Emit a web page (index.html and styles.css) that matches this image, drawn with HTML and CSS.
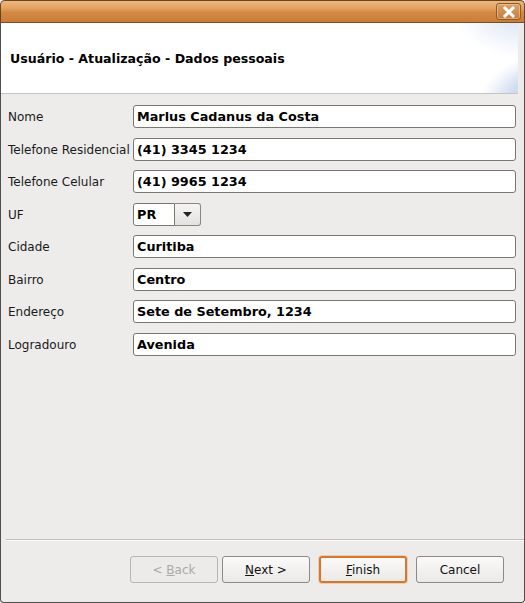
FILE: index.html
```html
<!DOCTYPE html>
<html lang="pt">
<head>
<meta charset="utf-8">
<link rel="stylesheet" href="styles.css">
</head>
<body>
<div class="window">
  <div class="titlebar">
    <div class="close-btn">
      <svg width="14" height="12" viewBox="0 0 14 12"><path d="M3 2 L11 10 M11 2 L3 10" stroke="#fff" stroke-width="3" stroke-linecap="square"/><path d="M3 2 L11 10 M11 2 L3 10" stroke="#fff" stroke-width="2.2"/></svg>
    </div>
  </div>
  <div class="frame">
    <div class="header">
      <div class="header-title">Usuário - Atualização - Dados pessoais</div>
      <div class="header-deco"></div>
    </div>
    <div class="form">
      <div class="row"><label class="lbl">Nome</label><div class="field">Marlus Cadanus da Costa</div></div>
      <div class="row"><label class="lbl">Telefone Residencial</label><div class="field">(41) 3345 1234</div></div>
      <div class="row"><label class="lbl">Telefone Celular</label><div class="field">(41) 9965 1234</div></div>
      <div class="row"><label class="lbl">UF</label>
        <div class="combo"><div class="combo-text">PR</div><div class="combo-btn"><svg width="9" height="5" viewBox="0 0 9 5"><path d="M0 0 H9 L4.5 5 Z" fill="#222"/></svg></div></div>
      </div>
      <div class="row"><label class="lbl">Cidade</label><div class="field">Curitiba</div></div>
      <div class="row"><label class="lbl">Bairro</label><div class="field">Centro</div></div>
      <div class="row"><label class="lbl">Endereço</label><div class="field">Sete de Setembro, 1234</div></div>
      <div class="row"><label class="lbl">Logradouro</label><div class="field">Avenida</div></div>
    </div>
    <div class="footer">
      <div class="sep"></div>
      <div class="buttons">
        <div class="btn disabled"><span>&lt; <u>B</u>ack</span></div>
        <div class="btn"><span><u>N</u>ext &gt;</span></div>
        <div class="btn default"><span><u>F</u>inish</span></div>
        <div class="btn"><span>Cancel</span></div>
      </div>
    </div>
  </div>
</div>
</body>
</html>
```

FILE: styles.css
```css
html, body {
  margin: 0;
  padding: 0;
  background: #edeceb;
}
body {
  width: 525px;
  height: 603px;
  overflow: hidden;
  font-family: "DejaVu Sans", sans-serif;
}
.window {
  width: 525px;
  height: 603px;
  display: flex;
  flex-direction: column;
  box-sizing: border-box;
}
.titlebar {
  height: 23px;
  flex: none;
  box-sizing: border-box;
  border: 1px solid #6b4520;
  border-bottom: 1px solid #7a4d22;
  border-radius: 5px 5px 0 0;
  background: linear-gradient(to bottom, #edb980 0%, #e2a260 35%, #d38943 55%, #c97d3a 100%);
  display: flex;
  justify-content: flex-end;
  align-items: flex-start;
  padding: 2px 3px 0 0;
}
.close-btn {
  width: 25px;
  height: 17px;
  box-sizing: border-box;
  border: 1px solid #8d5a2a;
  border-radius: 3px;
  background: linear-gradient(to bottom, #dca26a, #c57c3c);
  box-shadow: inset 0 0 0 1px rgba(255,220,180,0.45);
  display: flex;
  align-items: center;
  justify-content: center;
}
.frame {
  flex: 1;
  display: flex;
  flex-direction: column;
  border: 1px solid #4f4f4f;
  border-top: none;
  border-radius: 0 0 4px 4px;
  background: #edeceb;
}
.header {
  height: 70px;
  flex: none;
  background: #fff;
  border-bottom: 1px solid #c6c5c3;
  margin-right: 6px;
  position: relative;
  display: flex;
  align-items: center;
  overflow: hidden;
}
.header-title {
  font-weight: bold;
  font-size: 12.6px;
  color: #000;
  padding-left: 9px;
  padding-top: 1px;
}
.header-deco {
  position: absolute;
  right: 0;
  top: 0;
  width: 95px;
  height: 70px;
  background:
    radial-gradient(ellipse 120px 75px at 150px 85px, rgba(196,211,235,0.95) 0%, rgba(203,216,238,0.9) 55%, rgba(225,233,245,0.5) 70%, rgba(255,255,255,0) 80%),
    radial-gradient(ellipse 90px 60px at 100px -10px, rgba(212,223,242,0.9) 0%, rgba(255,255,255,0) 75%);
}
.form {
  padding: 11px 8px 0 7px;
  display: flex;
  flex-direction: column;
  gap: 9.5px;
}
.row {
  display: flex;
  align-items: center;
  height: 23px;
}
.lbl {
  width: 125px;
  flex: none;
  font-size: 12px;
  color: #1a1a1a;
  padding-top: 1px;
}
.field {
  flex: 1;
  height: 23px;
  box-sizing: border-box;
  border: 1px solid #7a7770;
  border-radius: 3px;
  background: #fff;
  font-weight: bold;
  font-size: 12.8px;
  color: #000;
  padding: 0 3px;
  line-height: 21px;
  white-space: nowrap;
}
.combo {
  display: flex;
  height: 23px;
}
.combo-text {
  width: 42px;
  box-sizing: border-box;
  border: 1px solid #7a7770;
  border-radius: 3px 0 0 3px;
  background: #fff;
  font-weight: bold;
  font-size: 12.8px;
  line-height: 21px;
  padding: 0 3px;
}
.combo-btn {
  width: 26px;
  box-sizing: border-box;
  border: 1px solid #8a8780;
  border-left: none;
  border-radius: 0 3px 3px 0;
  background: linear-gradient(to bottom, #f6f5f3, #e4e2de);
  display: flex;
  align-items: center;
  justify-content: center;
}
.footer {
  margin-top: auto;
  display: flex;
  flex-direction: column;
}
.sep {
  height: 1px;
  background: #c0bfbc;
  margin: 0 0 0 5px;
  border-bottom: 1px solid #fbfbfa;
}
.buttons {
  display: flex;
  justify-content: flex-end;
  padding: 15px 20px 19px 0;
}
.btn {
  width: 88px;
  height: 27px;
  box-sizing: border-box;
  border: 1px solid #8c8a86;
  border-radius: 3px;
  background: linear-gradient(to bottom, #fbfaf9, #ebe9e6);
  font-size: 12px;
  color: #111;
  display: flex;
  align-items: center;
  justify-content: center;
  margin-left: 4px;
  white-space: pre;
}
.btn u { text-decoration: underline; }
.btn.disabled {
  color: #aaa9a5;
  border-color: #b8b6b2;
  background: #ecebe9;
}
.btn.default {
  border: 2px solid #d5782e;
  box-shadow: 0 0 0 1px rgba(230,150,80,0.35);
  margin-left: 9px;
}
.btn.default + .btn { margin-left: 9px; }
```
